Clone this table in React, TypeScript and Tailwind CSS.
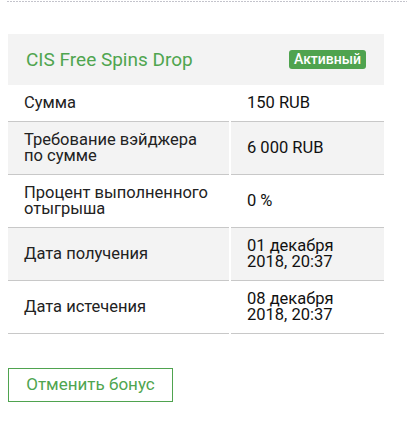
const rows = [
  { label: 'Сумма', value: '150 RUB' },
  { label: 'Требование вэйджера по сумме', value: '6 000 RUB' },
  { label: 'Процент выполненного отыгрыша', value: '0 %' },
  { label: 'Дата получения', value: '01 декабря 2018, 20:37' },
  { label: 'Дата истечения', value: '08 декабря 2018, 20:37' },
];

export default function App() {
  return (
    <div className="w-[409px] h-[432px] bg-white font-['Roboto',sans-serif] text-[#222]">
      <div className="ml-[7px] w-[400px] pt-px">
        <div className="h-px bg-[repeating-linear-gradient(90deg,#c4c4cc_0_2px,transparent_2px_3px)]" />
      </div>

      <div className="ml-2 mt-8 w-[376px]">
        <div className="flex items-center justify-between h-[51px] bg-[#f3f3f3] pl-[18px] pr-[18px]">
          <h2 className="text-[19px] text-[#4fa54f] leading-none">CIS Free Spins Drop</h2>
          <span className="bg-[#4fa34f] text-white text-[14px] font-medium leading-[19px] rounded-[3px] w-[77px] text-center">
            Активный
          </span>
        </div>

        <div className="grid grid-cols-[221px_153px] gap-x-[2px]">
          {rows.map((row, index) => {
            const bg = index % 2 === 1 ? 'bg-[#f3f3f3]' : 'bg-white';
            return (
              <div key={index} className="contents">
                <div
                  className={`${bg} border-b border-[#c8c8c8] pl-4 pr-3 py-[10px] flex items-center text-[16.5px] leading-[16px]`}
                >
                  <span className="max-w-[188px]">{row.label}</span>
                </div>
                <div
                  className={`${bg} border-b border-[#c8c8c8] pl-4 pr-3 py-[10px] flex items-center text-[16.5px] leading-[16px] text-[#111]`}
                >
                  <span className="max-w-[124px]">{row.value}</span>
                </div>
              </div>
            );
          })}
        </div>

        <button className="mt-[34px] h-[34px] w-[165px] border border-[#4fa34f] text-[#4fa54f] text-[17px]">
          Отменить бонус
        </button>
      </div>
    </div>
  );
}
